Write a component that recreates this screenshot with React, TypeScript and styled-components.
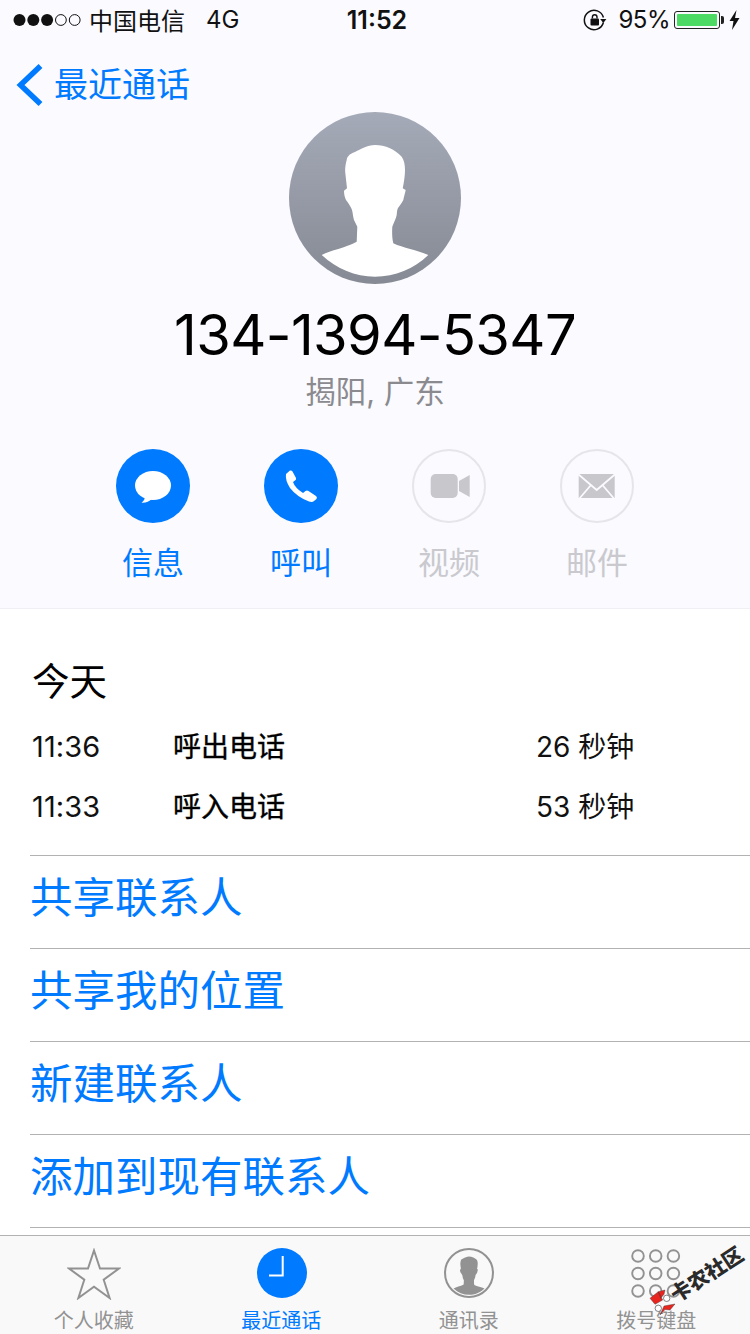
import React from "react";
import styled, { createGlobalStyle } from "styled-components";

const Global = createGlobalStyle`
  html, body { margin: 0; padding: 0; background: #fff; }
  body { font-family: "Inter", "Liberation Sans", "Noto Sans CJK SC", sans-serif; }
`;
const CJK = `"Inter", "Liberation Sans", "Noto Sans CJK SC", sans-serif`;
const BLUE = "#007aff";

const Page = styled.div`
  width: 750px; height: 1334px; display: flex; flex-direction: column;
  overflow: hidden; position: relative; background: #fff; font-family: ${CJK};
`;
const Top = styled.header`
  height: 609px; box-sizing: border-box; background: #fafaff; border-bottom: 1px solid #f0f0f4;
  display: flex; flex-direction: column; flex-shrink: 0;
`;
const StatusBar = styled.div`
  height: 39px; padding: 0 10px 0 13px; display: grid; grid-template-columns: 1fr auto 1fr;
  align-items: center; color: #111; font-size: 24px; box-sizing: border-box;
`;
const StatusLeft = styled.div`display: flex; align-items: center;`;
const StatusRight = styled.div`display: flex; align-items: center; justify-content: flex-end;`;
const Carrier = styled.span`margin-left: 8px;`;
const Net = styled.span`margin-left: 21px;`;
const Clock = styled.span`font-weight: 600; font-size: 25px; margin-left: 1px;`;
const Percent = styled.span`margin: 0 4px 0 11px; font-size: 24px; letter-spacing: -0.5px;`;
const Battery = styled.span`
  width: 46px; height: 18px; box-sizing: border-box; border: 1px solid #222; border-radius: 3px; padding: 2px;
  display: flex; position: relative; margin-right: 9px;
  &::after { content: ""; position: absolute; right: -5px; top: 4px; width: 3px; height: 8px; background: #222; border-radius: 0 2px 2px 0; }
`;
const BatteryFill = styled.span`flex: 1; background: #4cd964; border-radius: 1px;`;
const BackRow = styled.div`
  height: 73px; padding: 19px 0 0 16px; box-sizing: border-box; display: flex; align-items: center; gap: 11px;
  color: ${BLUE}; font-size: 34px; line-height: 1;
`;
const Avatar = styled.div`
  width: 172px; height: 172px; border-radius: 50%; margin: 0 auto; overflow: hidden; flex-shrink: 0;
  background: linear-gradient(#a5aab8, #868a94);
  svg { display: block; }
`;
const Phone = styled.div`
  margin-top: 19px; font-size: 56px; line-height: 64px; text-align: center; color: #000; letter-spacing: -0.6px;
  font-family: "Inter", "Liberation Sans", sans-serif;
`;
const Place = styled.div`
  margin-top: 5px; font-size: 30.5px; line-height: 40px; text-align: center; color: #8a8a8f;
`;
const Actions = styled.div`
  margin-top: 37px; padding-left: 116px; display: flex; gap: 74px;
`;
const Action = styled.div<{ $off?: boolean }>`
  width: 74px; display: flex; flex-direction: column; align-items: center; gap: 22px;
  color: ${p => (p.$off ? "#c9c9ce" : BLUE)}; font-size: 31px; line-height: 36px; white-space: nowrap;
`;
const Circle = styled.div<{ $off?: boolean }>`
  width: 74px; height: 74px; border-radius: 50%; box-sizing: border-box;
  background: ${p => (p.$off ? "transparent" : BLUE)};
  border: ${p => (p.$off ? "2px solid #e6e6ea" : "none")};
  display: flex; align-items: center; justify-content: center;
`;
const Calls = styled.section`padding: 51px 0 0 32px; height: 246px; box-sizing: border-box; flex-shrink: 0;`;
const Day = styled.div`font-size: 37.5px; line-height: 44px; color: #000; margin-bottom: 12px;`;
const CallRow = styled.div`
  display: grid; grid-template-columns: 141px 364px auto; height: 60px; align-items: center;
  font-size: 28px; color: #111;
`;
const CallTime = styled.span`font-size: 29px; letter-spacing: 0.1px;`;
const CallType = styled.span`color: #000; font-size: 28px; margin-top: -2px; -webkit-text-stroke: 0.35px #000;`;
const CallDur = styled.span`margin: -2px 0 0 -1px;`;
const Links = styled.div`flex: 1;`;
const LinkRow = styled.div`
  height: 93px; margin-left: 30px; padding-bottom: 7px; box-sizing: border-box; border-top: 1px solid #b2b2b2;
  display: flex; align-items: center; color: ${BLUE}; font-size: 42.5px; line-height: 1;
  &:last-child { height: 8px; padding: 0; }
`;
const TabBar = styled.nav`
  height: 99px; box-sizing: border-box; background: #f9f9f9; border-top: 1px solid #b2b2b2;
  display: grid; grid-template-columns: repeat(4, 1fr); flex-shrink: 0;
`;
const Tab = styled.div<{ $on?: boolean }>`
  display: flex; flex-direction: column; align-items: center; padding-top: 12px;
  color: ${p => (p.$on ? BLUE : "#929292")}; font-size: 20px; line-height: 24px;
  svg { display: block; margin-bottom: 9px; }
`;
const WatermarkLogo = styled.div`
  position: absolute; left: 648px; top: 1288px; width: 30px; height: 30px;
  svg { display: block; }
`;
const WatermarkText = styled.span`
  position: absolute; left: 664px; top: 1260px; width: 84px; height: 26px; text-align: center;
  transform: rotate(-33deg); font-size: 20.5px; font-weight: 900; color: #2a2a2a;
  white-space: nowrap; line-height: 26px; font-family: "Noto Sans CJK SC", sans-serif;
`;

const Silhouette = "M86 33 C78 33 72 37 66 40 C60 42 58 45 57.7 48 C56 54 56 58 56.3 61 L58 76.3 L55 78.7 C55 83 56 86 57 88 C60 92 62 95 63 98 C64 102 64 105 65 108 L68.3 114.7 C68 120 68 125 67.7 129.7 C56 136 42 138 32.7 143 C48 157 66 164.7 86 164.7 C106 164.7 125 157 139.3 143 C128 138 114 136 104.3 131.3 C103 126 103 120 103.3 114.7 C105 110 107 107 107.7 103 C108 100 108 98 109 96 C111 93 113 91 114.3 88 C115 85 116 81 116.7 78 L113.7 76.3 C115 70 116 64 116 58 C116 52 115 48 112.7 44.7 C109 41 105 38 101 36.3 C96 34 91 33 86 33 Z";

const Dots = () => (
  <svg width="68" height="14" viewBox="0 0 68 14">
    {[0, 1, 2, 3, 4].map(i => (
      <circle key={i} cx={6.5 + i * 13.8} cy="7" r={i < 3 ? 6 : 5.4} fill={i < 3 ? "#111" : "none"} stroke="#111" strokeWidth={i < 3 ? 0 : 1} />
    ))}
  </svg>
);

const Rotation = () => (
  <svg width="24" height="22" viewBox="0 0 24 22">
    <path d="M20.4 13.5 A9.7 9.7 0 1 1 20.4 8.5" fill="none" stroke="#111" strokeWidth="1.5" />
    <path d="M17.2 10 H23.4 L20.3 14 Z" fill="#111" />
    <rect x="7.5" y="9.5" width="8.5" height="7" rx="1" fill="#111" />
    <path d="M9.4 9.5 V8 A2.3 2.3 0 0 1 14 8 V9.5" fill="none" stroke="#111" strokeWidth="1.4" />
  </svg>
);

const Bolt = () => (
  <svg width="11" height="20" viewBox="0 0 11 20">
    <path d="M7.5 0 L0.5 11 H4.5 L3 20 L10.5 8 H6 Z" fill="#111" />
  </svg>
);

const Chevron = () => (
  <svg width="27" height="44" viewBox="0 0 27 44">
    <path d="M24.5 3 L4.5 22 L24.5 41" fill="none" stroke={BLUE} strokeWidth="5.5" />
  </svg>
);

const Bubble = () => (
  <svg width="74" height="74" viewBox="0 0 74 74">
    <ellipse cx="37" cy="36.5" rx="18" ry="14.5" fill="#fff" />
    <path d="M29 47 C29 50 28 52 25.5 53.7 C30 54 33 52.5 36 50 Z" fill="#fff" />
  </svg>
);

const Handset = () => (
  <svg width="74" height="74" viewBox="0 0 74 74">
    <path d="M22 25 L26 21.5 Q27.5 21 28.5 22.5 L32 29 Q32.5 30.5 31 31.5 L29 33 Q31 39 39 44 L41.5 42 Q43 41 44.5 42 L52 47 Q53.5 48 52.5 50 L50 52 Q48.5 53.5 45 52.5 Q33 48 26 39 Q21 31 22 25 Z" fill="#fff" />
  </svg>
);

const Video = () => (
  <svg width="70" height="70" viewBox="2 2 70 70">
    <rect x="18.7" y="25" width="27" height="24" rx="5" fill="#c7c7cc" />
    <path d="M47 32 L57.7 26 V48 L47 42 Z" fill="#c7c7cc" />
  </svg>
);

const Mail = () => (
  <svg width="70" height="70" viewBox="2 2 70 70">
    <rect x="18.7" y="25" width="36" height="24" fill="#c7c7cc" />
    <path d="M18 25 L36.7 41 L55.4 25 M19 50 L31 36 M54.4 50 L42.4 36" fill="none" stroke="#fafaff" strokeWidth="1.8" />
  </svg>
);

const Star = () => (
  <svg width="54" height="52" viewBox="0 0 54 52">
    <path d="M27 2.5 L33 20.5 L52 20.5 L36.7 31.7 L42.6 50 L27 38.8 L11.4 50 L17.3 31.7 L2 20.5 L21 20.5 Z" fill="none" stroke="#929292" strokeWidth="2" />
  </svg>
);

const ClockIcon = () => (
  <svg width="52" height="52" viewBox="-2 0 52 52">
    <circle cx="25" cy="25" r="25" fill={BLUE} />
    <path d="M25.7 8 V27.5 H12" fill="none" stroke="#fff" strokeWidth="2" />
  </svg>
);

const Contact = () => (
  <svg width="50" height="52" viewBox="0 0 172 179">
    <circle cx="86" cy="86" r="82.5" fill="#f9f9f9" stroke="#929292" strokeWidth="7" />
    <path d={Silhouette} fill="#929292" transform="translate(0 -4)" />
  </svg>
);

const Keypad = () => (
  <svg width="50" height="52" viewBox="0 0 50 52">
    {[0, 1, 2].flatMap(r =>
      [0, 1, 2].map(c => (
        <circle key={`${r}${c}`} cx={7 + c * 17.7} cy={8 + r * 17.5} r="5.8" fill="none" stroke="#929292" strokeWidth="1.9" />
      ))
    )}
  </svg>
);

const LogoMark = () => (
  <svg width="30" height="30" viewBox="0 0 30 30">
    <path d="M2 10.3 L10.3 3.7 L14.7 12 L7 16.3 Z M10.3 3.7 L17 2 L16 6.3 L12.7 10.3 Z M12 27 L16 18 L27 16 L22 22 L17 21.5 Z" fill="#e8261f" stroke="#333" strokeWidth="0.4" />
    <circle cx="18.7" cy="10.3" r="3.2" fill="#fff" stroke="#333" strokeWidth="0.6" />
    <circle cx="10.3" cy="20.3" r="3.2" fill="#fff" stroke="#333" strokeWidth="0.6" />
  </svg>
);

const calls = [
  { time: "11:36", type: "呼出电话", dur: "26 秒钟" },
  { time: "11:33", type: "呼入电话", dur: "53 秒钟" },
];
const links = ["共享联系人", "共享我的位置", "新建联系人", "添加到现有联系人", ""];

export default function App() {
  return (
    <Page>
      <Global />
      <Top>
        <StatusBar>
          <StatusLeft>
            <Dots />
            <Carrier>中国电信</Carrier>
            <Net>4G</Net>
          </StatusLeft>
          <Clock>11:52</Clock>
          <StatusRight>
            <Rotation />
            <Percent>95%</Percent>
            <Battery><BatteryFill /></Battery>
            <Bolt />
          </StatusRight>
        </StatusBar>
        <BackRow>
          <Chevron />
          <span>最近通话</span>
        </BackRow>
        <Avatar>
          <svg width="172" height="172" viewBox="0 0 172 172">
            <path d={Silhouette} fill="#fff" />
          </svg>
        </Avatar>
        <Phone>134-1394-5347</Phone>
        <Place>揭阳, 广东</Place>
        <Actions>
          <Action><Circle><Bubble /></Circle>信息</Action>
          <Action><Circle><Handset /></Circle>呼叫</Action>
          <Action $off><Circle $off><Video /></Circle>视频</Action>
          <Action $off><Circle $off><Mail /></Circle>邮件</Action>
        </Actions>
      </Top>
      <Calls>
        <Day>今天</Day>
        {calls.map(c => (
          <CallRow key={c.time}>
            <CallTime>{c.time}</CallTime>
            <CallType>{c.type}</CallType>
            <CallDur>{c.dur}</CallDur>
          </CallRow>
        ))}
      </Calls>
      <Links>
        {links.map((l, i) => <LinkRow key={i}>{l}</LinkRow>)}
      </Links>
      <TabBar>
        <Tab><Star />个人收藏</Tab>
        <Tab $on><ClockIcon />最近通话</Tab>
        <Tab><Contact />通讯录</Tab>
        <Tab><Keypad />拨号键盘</Tab>
      </TabBar>
      <WatermarkLogo><LogoMark /></WatermarkLogo>
      <WatermarkText>卡农社区</WatermarkText>
    </Page>
  );
}
